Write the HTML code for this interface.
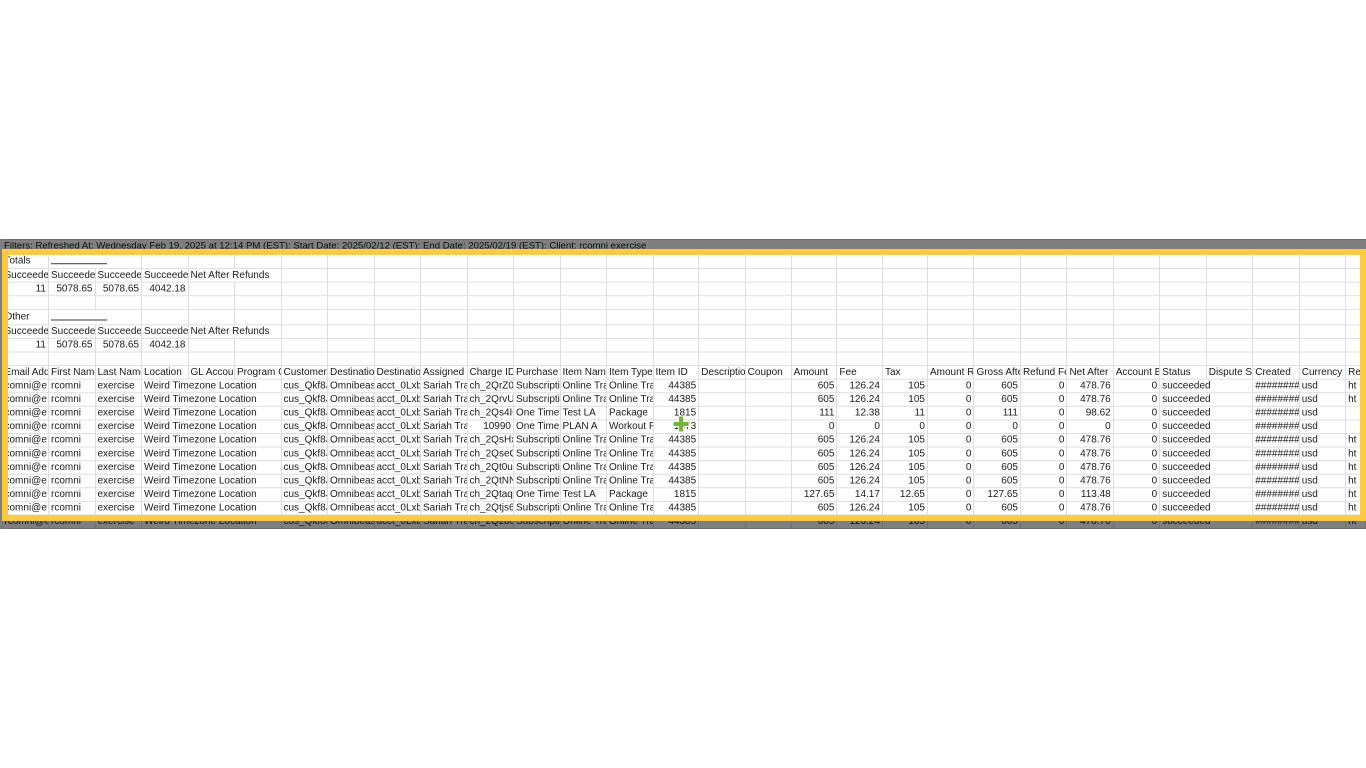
<!DOCTYPE html>
<html><head><meta charset="utf-8">
<style>
html,body{margin:0;padding:0;background:#fff;width:1366px;height:768px;overflow:hidden;position:relative;font-family:"Liberation Sans",Arial,sans-serif;}
#clip{position:absolute;left:0;top:239px;width:1366px;height:290px;overflow:hidden;}
#sheet{position:absolute;left:1.5px;top:0;border-collapse:collapse;table-layout:fixed;font-size:10px;color:#1a1a1a;transform:scaleY(0.97);transform-origin:0 0;}
#sheet td{width:46.5px;max-width:46.5px;height:14px;padding:0 2px;box-sizing:border-box;border:1px solid #dedede;white-space:nowrap;overflow:hidden;line-height:12px;vertical-align:middle;}
#sheet td.r{text-align:right;}
#sheet td.v{overflow:visible;border-right-style:hidden;}
#sheet td.h{border-right-style:hidden;}
#sheet tr.f td{border-left-style:hidden;border-right-style:hidden;}
#sheet tr.f td.v{font-size:9.6px;}
#sheet td.l{width:20px;max-width:20px;}
.ov{position:absolute;background:rgba(0,0,0,0.5);}
#box{position:absolute;left:2px;top:249px;width:1364px;height:272px;box-sizing:border-box;border:6px solid #fdcb3d;}
</style></head><body>
<div id="clip">
<table id="sheet">
<colgroup>
<col style="width:46.5px"><col style="width:46.5px"><col style="width:46.5px"><col style="width:46.5px"><col style="width:46.5px"><col style="width:46.5px"><col style="width:46.5px"><col style="width:46.5px"><col style="width:46.5px"><col style="width:46.5px"><col style="width:46.5px"><col style="width:46.5px"><col style="width:46.5px"><col style="width:46.5px"><col style="width:46.5px"><col style="width:46.5px"><col style="width:46.5px"><col style="width:46.5px"><col style="width:46.5px"><col style="width:46.5px"><col style="width:46.5px"><col style="width:46.5px"><col style="width:46.5px"><col style="width:46.5px"><col style="width:46.5px"><col style="width:46.5px"><col style="width:46.5px"><col style="width:46.5px"><col style="width:46.5px"><col style="width:20px">
</colgroup>
<tr class="f"><td class="v">Filters: Refreshed At: Wednesday Feb 19, 2025 at 12:14 PM (EST): Start Date: 2025/02/12 (EST): End Date: 2025/02/19 (EST): Client: rcomni exercise</td><td></td><td></td><td></td><td></td><td></td><td></td><td></td><td></td><td></td><td></td><td></td><td></td><td></td><td></td><td></td><td></td><td></td><td></td><td></td><td></td><td></td><td></td><td></td><td></td><td></td><td></td><td></td><td></td><td class="l"></td></tr>
<tr><td>Totals</td><td class="v"><span style="display:inline-block;width:56px;border-bottom:1px solid #333;height:10px"></span></td><td></td><td></td><td></td><td></td><td></td><td></td><td></td><td></td><td></td><td></td><td></td><td></td><td></td><td></td><td></td><td></td><td></td><td></td><td></td><td></td><td></td><td></td><td></td><td></td><td></td><td></td><td></td><td class="l"></td></tr>
<tr><td>Succeeded</td><td>Succeeded</td><td>Succeeded</td><td>Succeeded</td><td class="v">Net After Refunds</td><td></td><td></td><td></td><td></td><td></td><td></td><td></td><td></td><td></td><td></td><td></td><td></td><td></td><td></td><td></td><td></td><td></td><td></td><td></td><td></td><td></td><td></td><td></td><td></td><td class="l"></td></tr>
<tr><td class="r">11</td><td class="r">5078.65</td><td class="r">5078.65</td><td class="r">4042.18</td><td></td><td></td><td></td><td></td><td></td><td></td><td></td><td></td><td></td><td></td><td></td><td></td><td></td><td></td><td></td><td></td><td></td><td></td><td></td><td></td><td></td><td></td><td></td><td></td><td></td><td class="l"></td></tr>
<tr><td></td><td></td><td></td><td></td><td></td><td></td><td></td><td></td><td></td><td></td><td></td><td></td><td></td><td></td><td></td><td></td><td></td><td></td><td></td><td></td><td></td><td></td><td></td><td></td><td></td><td></td><td></td><td></td><td></td><td class="l"></td></tr>
<tr><td>Other</td><td class="v"><span style="display:inline-block;width:56px;border-bottom:1px solid #333;height:10px"></span></td><td></td><td></td><td></td><td></td><td></td><td></td><td></td><td></td><td></td><td></td><td></td><td></td><td></td><td></td><td></td><td></td><td></td><td></td><td></td><td></td><td></td><td></td><td></td><td></td><td></td><td></td><td></td><td class="l"></td></tr>
<tr><td>Succeeded</td><td>Succeeded</td><td>Succeeded</td><td>Succeeded</td><td class="v">Net After Refunds</td><td></td><td></td><td></td><td></td><td></td><td></td><td></td><td></td><td></td><td></td><td></td><td></td><td></td><td></td><td></td><td></td><td></td><td></td><td></td><td></td><td></td><td></td><td></td><td></td><td class="l"></td></tr>
<tr><td class="r">11</td><td class="r">5078.65</td><td class="r">5078.65</td><td class="r">4042.18</td><td></td><td></td><td></td><td></td><td></td><td></td><td></td><td></td><td></td><td></td><td></td><td></td><td></td><td></td><td></td><td></td><td></td><td></td><td></td><td></td><td></td><td></td><td></td><td></td><td></td><td class="l"></td></tr>
<tr><td></td><td></td><td></td><td></td><td></td><td></td><td></td><td></td><td></td><td></td><td></td><td></td><td></td><td></td><td></td><td></td><td></td><td></td><td></td><td></td><td></td><td></td><td></td><td></td><td></td><td></td><td></td><td></td><td></td><td class="l"></td></tr>
<tr><td>Email Add</td><td>First Name</td><td>Last Name</td><td>Location</td><td>GL Account</td><td>Program C</td><td>Customer</td><td>Destination</td><td>Destination</td><td>Assigned S</td><td>Charge ID</td><td>Purchase T</td><td>Item Name</td><td>Item Type</td><td>Item ID</td><td>Description</td><td>Coupon</td><td>Amount</td><td>Fee</td><td>Tax</td><td>Amount R</td><td>Gross After</td><td>Refund Fee</td><td>Net After</td><td>Account B</td><td>Status</td><td>Dispute St</td><td>Created</td><td>Currency</td><td class="l">Re</td></tr>
<tr><td>comni@e</td><td>rcomni</td><td>exercise</td><td class="v">Weird Timezone Location</td><td class="h"></td><td></td><td>cus_Qkf8J</td><td>Omnibeas</td><td>acct_0Lxb</td><td>Sariah Tra</td><td>ch_2QrZ0c</td><td>Subscripti</td><td>Online Tra</td><td>Online Tra</td><td class="r">44385</td><td></td><td></td><td class="r">605</td><td class="r">126.24</td><td class="r">105</td><td class="r">0</td><td class="r">605</td><td class="r">0</td><td class="r">478.76</td><td class="r">0</td><td class="v">succeeded</td><td></td><td>########</td><td>usd</td><td class="l">ht</td></tr>
<tr><td>comni@e</td><td>rcomni</td><td>exercise</td><td class="v">Weird Timezone Location</td><td class="h"></td><td></td><td>cus_Qkf8J</td><td>Omnibeas</td><td>acct_0Lxb</td><td>Sariah Tra</td><td>ch_2QrvUl</td><td>Subscripti</td><td>Online Tra</td><td>Online Tra</td><td class="r">44385</td><td></td><td></td><td class="r">605</td><td class="r">126.24</td><td class="r">105</td><td class="r">0</td><td class="r">605</td><td class="r">0</td><td class="r">478.76</td><td class="r">0</td><td class="v">succeeded</td><td></td><td>########</td><td>usd</td><td class="l">ht</td></tr>
<tr><td>comni@e</td><td>rcomni</td><td>exercise</td><td class="v">Weird Timezone Location</td><td class="h"></td><td></td><td>cus_Qkf8J</td><td>Omnibeas</td><td>acct_0Lxb</td><td>Sariah Tra</td><td>ch_2Qs4IG</td><td>One Time</td><td>Test LA</td><td>Package</td><td class="r">1815</td><td></td><td></td><td class="r">111</td><td class="r">12.38</td><td class="r">11</td><td class="r">0</td><td class="r">111</td><td class="r">0</td><td class="r">98.62</td><td class="r">0</td><td class="v">succeeded</td><td></td><td>########</td><td>usd</td><td class="l"></td></tr>
<tr><td>comni@e</td><td>rcomni</td><td>exercise</td><td class="v">Weird Timezone Location</td><td class="h"></td><td></td><td>cus_Qkf8J</td><td>Omnibeas</td><td>acct_0Lxb</td><td>Sariah Tra</td><td class="r">10990</td><td>One Time</td><td>PLAN A</td><td>Workout P</td><td class="r">1473</td><td></td><td></td><td class="r">0</td><td class="r">0</td><td class="r">0</td><td class="r">0</td><td class="r">0</td><td class="r">0</td><td class="r">0</td><td class="r">0</td><td class="v">succeeded</td><td></td><td>########</td><td>usd</td><td class="l"></td></tr>
<tr><td>comni@e</td><td>rcomni</td><td>exercise</td><td class="v">Weird Timezone Location</td><td class="h"></td><td></td><td>cus_Qkf8J</td><td>Omnibeas</td><td>acct_0Lxb</td><td>Sariah Tra</td><td>ch_2QsHx</td><td>Subscripti</td><td>Online Tra</td><td>Online Tra</td><td class="r">44385</td><td></td><td></td><td class="r">605</td><td class="r">126.24</td><td class="r">105</td><td class="r">0</td><td class="r">605</td><td class="r">0</td><td class="r">478.76</td><td class="r">0</td><td class="v">succeeded</td><td></td><td>########</td><td>usd</td><td class="l">ht</td></tr>
<tr><td>comni@e</td><td>rcomni</td><td>exercise</td><td class="v">Weird Timezone Location</td><td class="h"></td><td></td><td>cus_Qkf8J</td><td>Omnibeas</td><td>acct_0Lxb</td><td>Sariah Tra</td><td>ch_2QseQ</td><td>Subscripti</td><td>Online Tra</td><td>Online Tra</td><td class="r">44385</td><td></td><td></td><td class="r">605</td><td class="r">126.24</td><td class="r">105</td><td class="r">0</td><td class="r">605</td><td class="r">0</td><td class="r">478.76</td><td class="r">0</td><td class="v">succeeded</td><td></td><td>########</td><td>usd</td><td class="l">ht</td></tr>
<tr><td>comni@e</td><td>rcomni</td><td>exercise</td><td class="v">Weird Timezone Location</td><td class="h"></td><td></td><td>cus_Qkf8J</td><td>Omnibeas</td><td>acct_0Lxb</td><td>Sariah Tra</td><td>ch_2Qt0ul</td><td>Subscripti</td><td>Online Tra</td><td>Online Tra</td><td class="r">44385</td><td></td><td></td><td class="r">605</td><td class="r">126.24</td><td class="r">105</td><td class="r">0</td><td class="r">605</td><td class="r">0</td><td class="r">478.76</td><td class="r">0</td><td class="v">succeeded</td><td></td><td>########</td><td>usd</td><td class="l">ht</td></tr>
<tr><td>comni@e</td><td>rcomni</td><td>exercise</td><td class="v">Weird Timezone Location</td><td class="h"></td><td></td><td>cus_Qkf8J</td><td>Omnibeas</td><td>acct_0Lxb</td><td>Sariah Tra</td><td>ch_2QtNN</td><td>Subscripti</td><td>Online Tra</td><td>Online Tra</td><td class="r">44385</td><td></td><td></td><td class="r">605</td><td class="r">126.24</td><td class="r">105</td><td class="r">0</td><td class="r">605</td><td class="r">0</td><td class="r">478.76</td><td class="r">0</td><td class="v">succeeded</td><td></td><td>########</td><td>usd</td><td class="l">ht</td></tr>
<tr><td>comni@e</td><td>rcomni</td><td>exercise</td><td class="v">Weird Timezone Location</td><td class="h"></td><td></td><td>cus_Qkf8J</td><td>Omnibeas</td><td>acct_0Lxb</td><td>Sariah Tra</td><td>ch_2Qtaq</td><td>One Time</td><td>Test LA</td><td>Package</td><td class="r">1815</td><td></td><td></td><td class="r">127.65</td><td class="r">14.17</td><td class="r">12.65</td><td class="r">0</td><td class="r">127.65</td><td class="r">0</td><td class="r">113.48</td><td class="r">0</td><td class="v">succeeded</td><td></td><td>########</td><td>usd</td><td class="l">ht</td></tr>
<tr><td>comni@e</td><td>rcomni</td><td>exercise</td><td class="v">Weird Timezone Location</td><td class="h"></td><td></td><td>cus_Qkf8J</td><td>Omnibeas</td><td>acct_0Lxb</td><td>Sariah Tra</td><td>ch_2Qtjs6</td><td>Subscripti</td><td>Online Tra</td><td>Online Tra</td><td class="r">44385</td><td></td><td></td><td class="r">605</td><td class="r">126.24</td><td class="r">105</td><td class="r">0</td><td class="r">605</td><td class="r">0</td><td class="r">478.76</td><td class="r">0</td><td class="v">succeeded</td><td></td><td>########</td><td>usd</td><td class="l">ht</td></tr>
<tr><td>rcomni@e</td><td>rcomni</td><td>exercise</td><td class="v">Weird Timezone Location</td><td class="h"></td><td></td><td>cus_Qkf8J</td><td>Omnibeas</td><td>acct_0Lxb</td><td>Sariah Tra</td><td>ch_2Qzb0</td><td>Subscripti</td><td>Online Tra</td><td>Online Tra</td><td class="r">44385</td><td></td><td></td><td class="r">605</td><td class="r">126.24</td><td class="r">105</td><td class="r">0</td><td class="r">605</td><td class="r">0</td><td class="r">478.76</td><td class="r">0</td><td class="v">succeeded</td><td></td><td>########</td><td>usd</td><td class="l">ht</td></tr>
</table>
</div>
<svg style="position:absolute;left:672px;top:415px" width="18" height="18" viewBox="0 0 18 18"><path d="M6.5 1h5v5.5H17v5h-5.5V17h-5v-5.5H1v-5h5.5z" fill="#6fb833" stroke="#fff" stroke-width="1"/></svg>
<div class="ov" style="left:0;top:239px;width:1366px;height:10px"></div>
<div class="ov" style="left:0;top:521px;width:1366px;height:8px"></div>
<div class="ov" style="left:0;top:249px;width:2px;height:272px"></div>
<div id="box"></div>
</body></html>
